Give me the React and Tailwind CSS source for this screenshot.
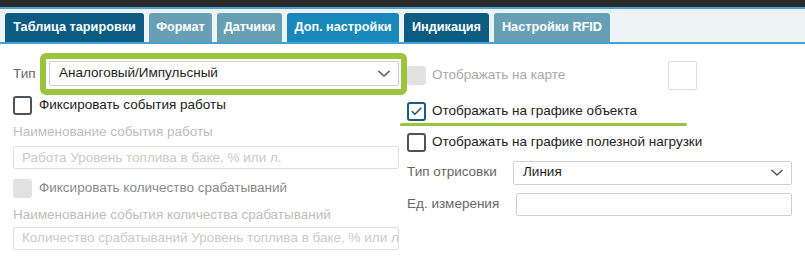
import { Check, ChevronDown } from "lucide-react";

const TABS = [
  { label: "Таблица тарировки", w: "w-[139px]", tone: "bg-[#0b5b82]" },
  { label: "Формат", w: "w-[63px]", tone: "bg-[#679fb5]" },
  { label: "Датчики", w: "w-[65px]", tone: "bg-[#679fb5]" },
  { label: "Доп. настройки", w: "w-[112px]", tone: "bg-[#1888bb]" },
  { label: "Индикация", w: "w-[85px]", tone: "bg-[#0b5b82]" },
  { label: "Настройки RFID", w: "w-[116px]", tone: "bg-[#679fb5]" },
];

function Box({ state }) {
  if (state === "disabled") {
    return <span className="h-[19px] w-[19px] shrink-0 rounded-[3px] bg-[#e2e2e2]" />;
  }
  if (state === "checked") {
    return (
      <span className="flex h-[19px] w-[19px] shrink-0 items-center justify-center rounded-[3px] border-2 border-[#1c5b7e] bg-white text-[#1c5b7e]">
        <Check size={13} strokeWidth={3} />
      </span>
    );
  }
  return <span className="h-[19px] w-[19px] shrink-0 rounded-[3px] border-2 border-[#4d5358] bg-white" />;
}

function Select({ value, className }) {
  return (
    <div
      className={`flex shrink-0 items-center justify-between rounded-[2px] border border-[#cfcfcf] bg-white pl-[9px] pr-[7px] text-[13.5px] text-[#1e1e1e] ${className}`}
    >
      <span>{value}</span>
      <svg width="14" height="9" viewBox="0 0 14 9" fill="none" className="text-[#555]">
        <path d="M1.5 2l5.5 5 5.5-5" stroke="currentColor" strokeWidth="1.6" />
      </svg>
    </div>
  );
}

export default function App() {
  return (
    <div
      className="h-[259px] w-[805px] overflow-hidden bg-white"
      style={{ fontFamily: '"Liberation Sans", Arial, sans-serif' }}
    >
      <div className="h-[7px] bg-[#2a2a2a]" />
      <div className="flex h-[37px] items-end gap-[5px] border-t-2 border-b-2 border-[#45a0d4] bg-[#eef3f6] pl-[5px]">
        {TABS.map((t) => (
          <div
            key={t.label}
            className={`flex h-[29px] shrink-0 items-center justify-center rounded-t-[3px] text-[12.7px] font-bold text-white ${t.w} ${t.tone}`}
          >
            {t.label}
          </div>
        ))}
      </div>

      <div className="flex">
        {/* left column */}
        <div className="w-[407px] shrink-0 pl-[13px]">
          <div className="mt-[9px] flex items-center">
            <span className="w-[27px] shrink-0 text-[13.5px] text-[#666]">Тип</span>
            <div className="h-[42px] w-[367px] shrink-0 rounded-[6px] border-[6px] border-[#9ac43c] bg-white pl-[3px] pt-[2px]">
              <Select value="Аналоговый/Импульсный" className="h-[25px] w-[350px]" />
            </div>
          </div>

          <label className="flex items-center gap-[7px] text-[13.5px] text-[#222]">
            <Box />
            Фиксировать события работы
          </label>

          <div className="mt-[9px] text-[13.5px] leading-[16px] text-[#bdbdbd]">
            Наименование события работы
          </div>
          <div className="mt-[6px] flex h-[23px] w-[386px] items-center rounded-[2px] border border-[#e0e0e0] px-[8px] text-[13.5px] text-[#c9c9c9]">
            Работа Уровень топлива в баке, % или л.
          </div>

          <label className="mt-[9px] flex items-center gap-[7px] text-[13.5px] text-[#8a8a8a]">
            <Box state="disabled" />
            Фиксировать количество срабатываний
          </label>

          <div className="mt-[8px] text-[13.5px] leading-[16px] text-[#bdbdbd]">
            Наименование события количества срабатываний
          </div>
          <div className="mt-[4px] flex h-[23px] w-[386px] items-center overflow-hidden whitespace-nowrap rounded-[2px] border border-[#e0e0e0] px-[8px] text-[13.5px] text-[#c9c9c9]">
            Количество срабатываний Уровень топлива в баке, % или л.
          </div>
        </div>

        {/* right column */}
        <div className="w-[385px] shrink-0">
          <div className="mt-[17px] flex items-center">
            <label className="flex w-[261px] shrink-0 items-center gap-[6px] text-[13.5px] text-[#a8a8a8]">
              <Box state="disabled" />
              Отображать на карте
            </label>
            <div className="h-[29px] w-[29px] rounded-[2px] border border-[#dcdcdc] bg-white" />
          </div>

          <label className="mt-[11px] flex items-center gap-[6px] text-[13.5px] text-[#222]">
            <Box state="checked" />
            Отображать на графике объекта
          </label>
          <div className="-ml-[7px] mt-[2px] h-[3px] w-[287px] rounded-full bg-[#9ac43c]" />

          <label className="mt-[6px] flex items-center gap-[6px] text-[13.5px] text-[#222]">
            <Box />
            Отображать на графике полезной нагрузки
          </label>

          <div className="mt-[8px] flex items-center">
            <span className="w-[106px] shrink-0 text-[13.5px] text-[#666]">Тип отрисовки</span>
            <Select value="Линия" className="h-[24px] w-[279px]" />
          </div>

          <div className="mt-[8px] flex items-center">
            <span className="w-[109px] shrink-0 text-[13.5px] text-[#666]">Ед. измерения</span>
            <div className="h-[23px] w-[276px] rounded-[2px] border border-[#cfcfcf] bg-white" />
          </div>
        </div>
      </div>
    </div>
  );
}
